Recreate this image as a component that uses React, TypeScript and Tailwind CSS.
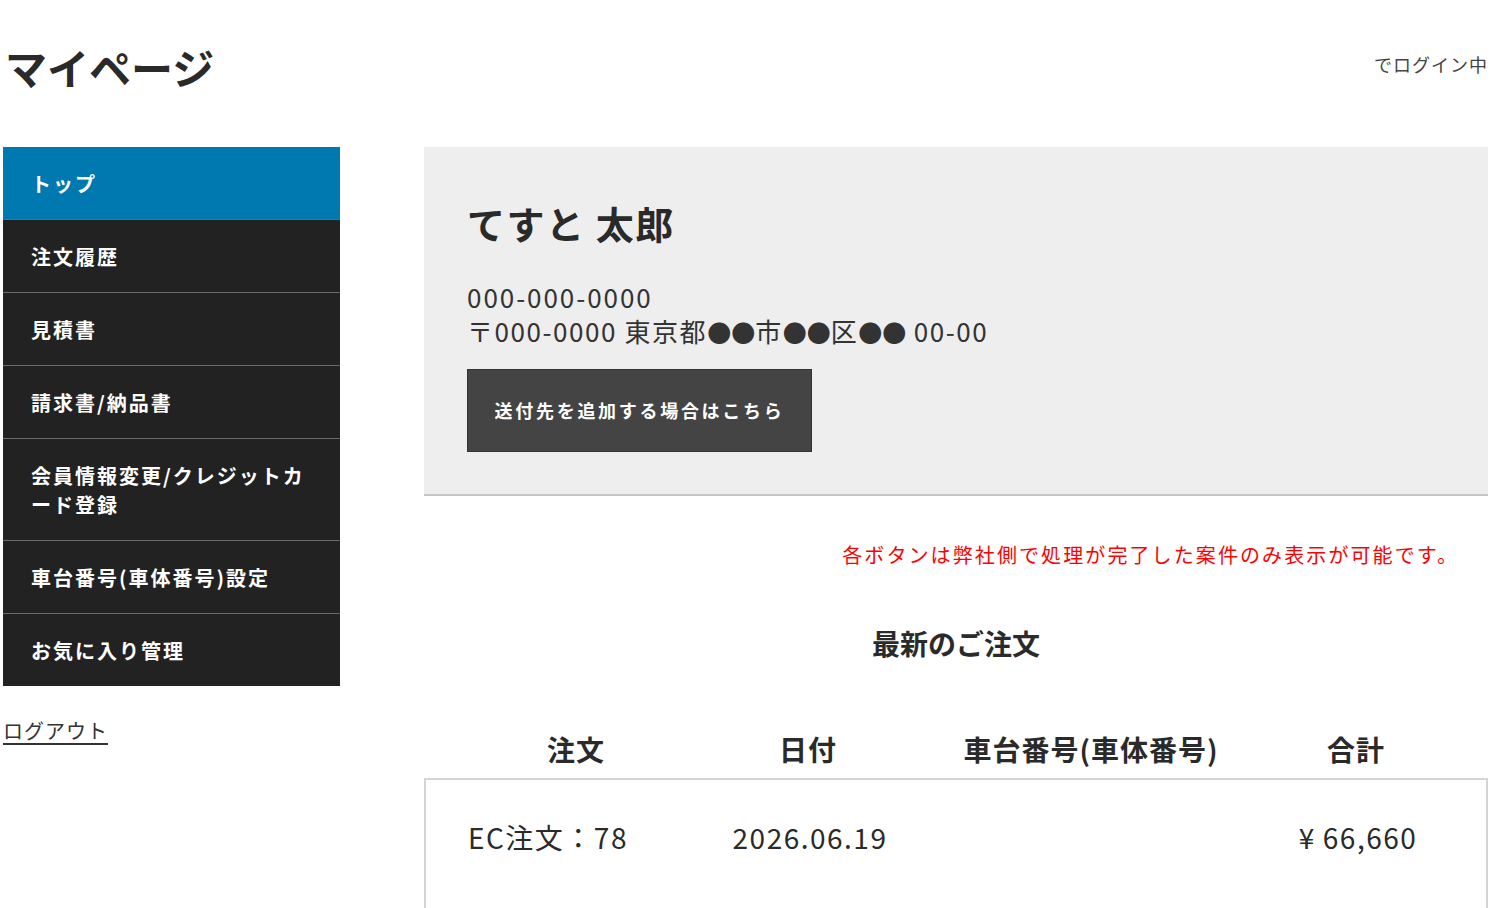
const menu = [
  { label: 'トップ', active: true },
  { label: '注文履歴' },
  { label: '見積書' },
  { label: '請求書/納品書' },
  { label: '会員情報変更/クレジットカード登録' },
  { label: '車台番号(車体番号)設定' },
  { label: 'お気に入り管理' },
];

const Dots = () => <span className="text-[24px] tracking-[0px]">●●</span>;

const App = () => {
  return (
    <div
      className="min-h-screen bg-white text-[#333] pl-[3px] pr-[12px]"
      style={{ fontFamily: '"Noto Sans CJK JP", "Noto Sans", sans-serif' }}
    >
      {/* Header */}
      <div className="flex items-center justify-between h-[147px] pb-[14px]">
        <h1 className="text-[42px] font-bold leading-none pl-[2px] text-[#2a2a2a]">マイページ</h1>
        <p className="text-[18px] tracking-[1px] text-[#444] pb-[4px]">でログイン中</p>
      </div>

      <div className="flex gap-[84px]">
        {/* Sidebar */}
        <div className="w-[337px] shrink-0">
          <ul className="bg-[#222]">
            {menu.map((m, i) => (
              <li
                key={i}
                className={`${m.active ? 'bg-[#0079b1]' : 'bg-[#222] border-t border-[#6a6a6a]'} pl-[28px] pr-[20px] py-[21.5px] text-white text-[20px] font-bold tracking-[0.1em] leading-[29px]`}
              >
                {m.label}
              </li>
            ))}
          </ul>
          <a href="#" className="inline-block mt-[30px] text-[20px] tracking-[1px] underline underline-offset-4 text-[#333]">
            ログアウト
          </a>
        </div>

        {/* Main */}
        <div className="flex-1">
          <div className="bg-[#eee] border-b-2 border-[#c6c6c6] px-[43px] pt-[49px] pb-[42px]">
            <h2 className="text-[38px] font-bold tracking-[1.5px] leading-[1.4] text-[#2a2a2a]">てすと 太郎</h2>
            <div className="mt-[31px] text-[26px] tracking-[0.075em] leading-[34px] text-[#333]">
              <p>000-000-0000</p>
              <p className="tracking-[0.06em]">
                〒000-0000 東京都<Dots />市<Dots />区<Dots /> 00-00
              </p>
            </div>
            <button className="mt-[20px] w-[345px] h-[83px] bg-[#444] border border-[#333] text-white text-[18px] font-bold tracking-[0.15em]">
              送付先を追加する場合はこちら
            </button>
          </div>

          <p className="mt-[44px] text-right pr-[29px] text-[20px] tracking-[2.1px] text-[#f00]">
            各ボタンは弊社側で処理が完了した案件のみ表示が可能です。
          </p>

          <h3 className="mt-[52px] text-center text-[28px] font-bold text-[#2a2a2a]">最新のご注文</h3>

          {/* Orders table */}
          <div className="mt-[64px]">
            <div className="grid grid-cols-[304px_160px_406px_124px] text-[28px] font-bold tracking-[1px] text-[#2a2a2a] text-center pb-[8px]">
              <div>注文</div>
              <div>日付</div>
              <div>車台番号(車体番号)</div>
              <div>合計</div>
            </div>
            <div className="grid grid-cols-[304px_160px_406px_124px] items-start h-[140px] pt-[36px] border-x-2 border-t-2 border-[#d4d4d4] text-[28px] tracking-[1.5px] text-[#2a2a2a]">
              <div className="pl-[42px]">EC注文：78</div>
              <div className="text-center whitespace-nowrap">2026.06.19</div>
              <div></div>
              <div className="text-center whitespace-nowrap">¥&thinsp;66,660</div>
            </div>
          </div>
        </div>
      </div>
    </div>
  );
};

export default App;
